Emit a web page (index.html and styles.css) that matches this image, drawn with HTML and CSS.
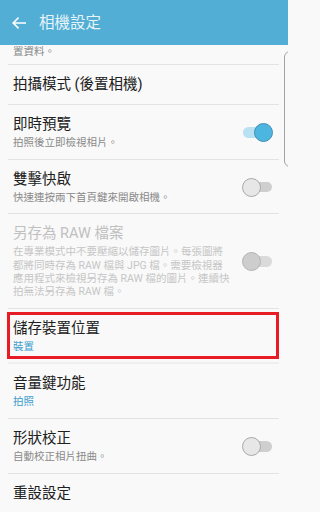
FILE: index.html
```html
<!DOCTYPE html>
<html lang="zh-Hant">
<head>
<meta charset="utf-8">
<title>相機設定</title>
<link rel="stylesheet" href="styles.css">
</head>
<body>
<div class="screen">
  <header class="appbar">
    <svg class="back" width="14" height="12" viewBox="0 0 14 12" aria-hidden="true">
      <path d="M13.4 6H1.2M6 1.2L1.2 6L6 10.8" fill="none" stroke="#ffffff" stroke-width="1.6" stroke-linecap="square"/>
    </svg>
    <h1 class="title">相機設定</h1>
  </header>
  <main class="list">
    <div class="row row-partial">
      <div class="sub">置資料。</div>
    </div>
    <div class="row row-single">
      <div class="text"><div class="name">拍攝模式 (後置相機)</div></div>
    </div>
    <div class="row">
      <div class="text">
        <div class="name">即時預覽</div>
        <div class="sub">拍照後立即檢視相片。</div>
      </div>
      <div class="toggle on"><span class="track"></span><span class="knob"></span></div>
    </div>
    <div class="row">
      <div class="text">
        <div class="name">雙擊快啟</div>
        <div class="sub">快速連按兩下首頁鍵來開啟相機。</div>
      </div>
      <div class="toggle"><span class="track"></span><span class="knob"></span></div>
    </div>
    <div class="row disabled">
      <div class="text">
        <div class="name">另存為 RAW 檔案</div>
        <div class="sub">在專業模式中不要壓縮以儲存圖片。每張圖將<br>都將同時存為 RAW 檔與 JPG 檔。需要檢視器<br>應用程式來檢視另存為 RAW 檔的圖片。連續快<br>拍無法另存為 RAW 檔。</div>
      </div>
      <div class="toggle"><span class="track"></span><span class="knob"></span></div>
    </div>
    <div class="row highlighted">
      <div class="text">
        <div class="name">儲存裝置位置</div>
        <div class="sub value">裝置</div>
      </div>
    </div>
    <div class="row">
      <div class="text">
        <div class="name">音量鍵功能</div>
        <div class="sub value">拍照</div>
      </div>
    </div>
    <div class="row">
      <div class="text">
        <div class="name">形狀校正</div>
        <div class="sub">自動校正相片扭曲。</div>
      </div>
      <div class="toggle"><span class="track"></span><span class="knob"></span></div>
    </div>
    <div class="row row-single last">
      <div class="text"><div class="name">重設設定</div></div>
    </div>
  </main>
  <div class="edge-handle"></div>
</div>
</body>
</html>
```
FILE: styles.css
```css
* { box-sizing: border-box; }

html, body {
  margin: 0;
  padding: 0;
}

body {
  width: 288px;
  height: 512px;
  overflow: hidden;
  background: #f9f9f9;
  font-family: Roboto, "Noto Sans CJK TC", "Noto Sans", sans-serif;
}

.screen {
  position: relative;
  width: 288px;
  height: 512px;
  overflow: hidden;
  display: flex;
  flex-direction: column;
}

.appbar {
  height: 45px;
  flex: 0 0 45px;
  background: #52aed5;
  display: flex;
  align-items: center;
  padding-left: 12px;
}

.back {
  display: block;
}

.title {
  margin: 0 0 0 13px;
  font-size: 15.5px;
  font-weight: 400;
  line-height: 20px;
  color: rgba(255, 255, 255, 0.88);
}

.list {
  flex: 1;
  overflow: hidden;
  display: flex;
  flex-direction: column;
}

.row {
  margin: 0 9px 0 8px;
  padding: 11px 6px 9.5px 5px;
  border-bottom: 1px solid #e3e3e3;
  display: flex;
  align-items: center;
  gap: 8px;
}

.row-partial {
  height: 20px;
  padding: 0 6px 0 5px;
  align-items: flex-start;
  flex: 0 0 20px;
}

.row-partial .sub {
  margin-top: 0;
  line-height: 13px;
}

.row-single {
  padding-bottom: 10px;
}

.row.last {
  border-bottom: none;
}

.text {
  flex: 1;
  min-width: 0;
}

.name {
  font-size: 14.5px;
  line-height: 18px;
  color: #202020;
  white-space: nowrap;
}

.sub {
  margin-top: 2px;
  font-size: 10.5px;
  line-height: 13.2px;
  color: #8a8a8a;
  white-space: nowrap;
}

.sub.value {
  color: #3d9dcb;
}

.disabled .name {
  color: #c0c0c0;
}

.disabled .sub {
  color: #c6c6c6;
}

.highlighted {
  position: relative;
  border-bottom: 2px solid #efefef;
}

.highlighted::after {
  content: "";
  position: absolute;
  top: 3px;
  bottom: 3px;
  left: -1px;
  right: 0;
  border: 3px solid #e81c25;
}

.toggle {
  position: relative;
  flex: 0 0 31px;
  width: 31px;
  height: 19px;
}

.toggle .track {
  position: absolute;
  left: 1px;
  right: 1px;
  top: 4px;
  height: 10.5px;
  border-radius: 6px;
  background: #cfcfcf;
}

.toggle .knob {
  position: absolute;
  top: 0;
  left: 0;
  width: 19px;
  height: 19px;
  border-radius: 50%;
  background: #e7e7e7;
  border: 1px solid #a9a9a9;
}

.toggle.on .track {
  background: #b8e1f2;
}

.toggle.on .knob {
  left: auto;
  right: 0;
  background: #4db6e0;
  border-color: #3f8fb3;
}

.disabled .toggle .track {
  background: #dadada;
}

.disabled .toggle .knob {
  background: #cdcdcd;
  border-color: #b4b4b4;
}

.edge-handle {
  position: absolute;
  left: 284px;
  top: 51px;
  width: 12px;
  height: 116px;
  border: 1px solid #a3a3a3;
  border-radius: 6px;
}
```
